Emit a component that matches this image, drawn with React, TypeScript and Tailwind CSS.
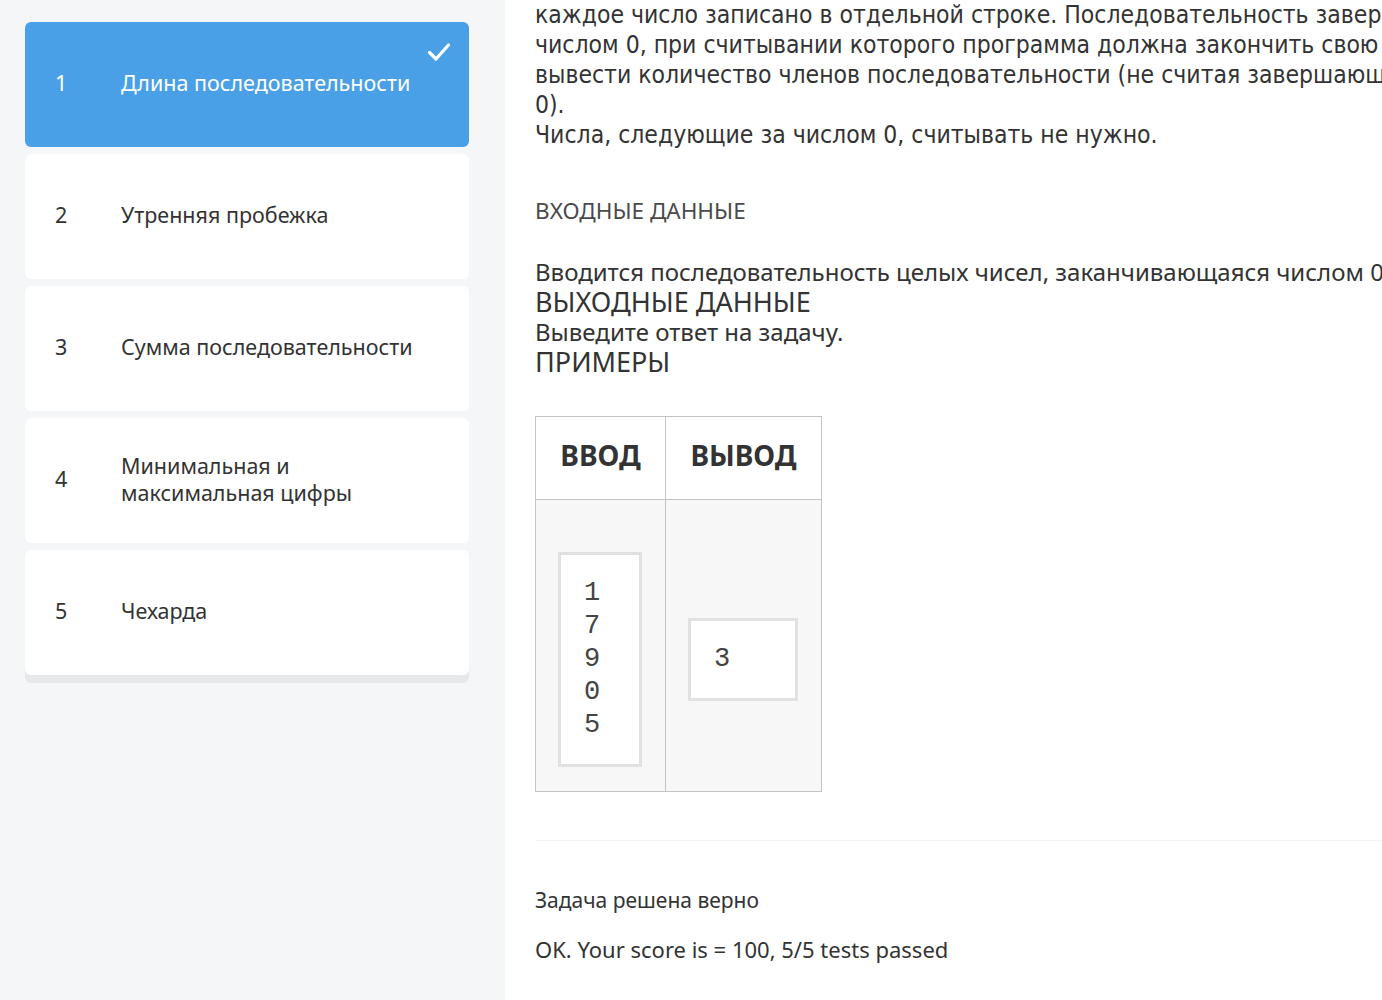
const tasks = [
  { n: 1, title: "Длина последовательности", done: true },
  { n: 2, title: "Утренняя пробежка" },
  { n: 3, title: "Сумма последовательности" },
  { n: 4, title: "Минимальная и максимальная цифры" },
  { n: 5, title: "Чехарда" },
];

const sans = "font-['Noto_Sans',sans-serif]";

function TaskCard({ n, title, done, last }: { n: number; title: string; done?: boolean; last?: boolean }) {
  return (
    <div
      className={
        "relative flex items-center h-[125px] rounded-md pl-[30px] pr-[40px] pb-[4px] text-[21.5px] leading-[27px] " +
        (done ? "bg-[#4aa0e6] text-white" : "bg-white text-[#333]") +
        (last ? " shadow-[0_8px_0_0_#e7e8ea]" : "")
      }
    >
      <span className="w-[66px] shrink-0">{n}</span>
      <span>{title}</span>
      {done && (
        <svg className="absolute right-[18px] top-[20px]" width="24" height="20" viewBox="0 0 24 20" fill="none">
          <path d="M2.5 10.5 L9 17 L21.5 3" stroke="white" strokeWidth="3.2" strokeLinecap="round" strokeLinejoin="round" />
        </svg>
      )}
    </div>
  );
}

export default function App() {
  return (
    <div className={"w-[1382px] h-[1000px] overflow-hidden flex bg-white " + sans}>
      <aside className="w-[505px] shrink-0 bg-[#f5f6f8] pt-[22px] pl-[25px] pr-[36px]">
        <div className="flex flex-col gap-[7px]">
          {tasks.map((t, i) => (
            <TaskCard key={t.n} {...t} last={i === tasks.length - 1} />
          ))}
        </div>
      </aside>

      <main className="pl-[30px] w-[1200px] shrink-0 text-[#333]">
        <p className="font-['DejaVu_Sans_Condensed','Liberation_Sans_Narrow',sans-serif] [font-stretch:condensed] text-[24.5px] leading-[30px] whitespace-nowrap">
          каждое число записано в отдельной строке. Последовательность завершается
          <br />
          числом 0, при считывании которого программа должна закончить свою работу и
          <br />
          вывести количество членов последовательности (не считая завершающего числа
          <br />
          0).
          <br />
          Числа, следующие за числом 0, считывать не нужно.
        </p>

        <h3 className="mt-[48px] text-[22.5px] leading-[26px] text-[#4a4a4a]">ВХОДНЫЕ ДАННЫЕ</h3>

        <p className="mt-[33px] text-[24px] leading-[30px] whitespace-nowrap">
          Вводится последовательность целых чисел, заканчивающаяся числом 0.
        </p>
        <h3 className="text-[27px] leading-[30px]">ВЫХОДНЫЕ ДАННЫЕ</h3>
        <p className="text-[24px] leading-[30px]">Выведите ответ на задачу.</p>
        <h3 className="text-[27px] leading-[30px]">ПРИМЕРЫ</h3>

        <table className="mt-[39px] border-collapse border border-[#c4c4c4]">
          <thead>
            <tr className="h-[83px] bg-white">
              <th className="w-[130px] border border-[#c4c4c4] pb-[6px] text-[28px] font-bold text-[#333]">ВВОД</th>
              <th className="w-[156px] border border-[#c4c4c4] pb-[6px] text-[28px] font-bold text-[#333]">ВЫВОД</th>
            </tr>
          </thead>
          <tbody>
            <tr className="h-[292px] bg-[#f7f7f7]">
              <td className="border border-[#c4c4c4] px-[22px] align-middle">
                <pre className="mt-[27px] bg-white border-[3px] border-[#e1e1e1] w-[84px] pl-[23px] py-[22px] font-['Liberation_Mono',monospace] text-[27px] leading-[33px] text-[#444]">
                  {"1\n7\n9\n0\n5"}
                </pre>
              </td>
              <td className="border border-[#c4c4c4] px-[22px] align-middle">
                <pre className="mt-[27px] bg-white border-[3px] border-[#e1e1e1] w-[110px] pl-[23px] py-[22px] font-['Liberation_Mono',monospace] text-[27px] leading-[33px] text-[#444]">
                  3
                </pre>
              </td>
            </tr>
          </tbody>
        </table>

        <div className="mt-[48px] border-t border-[#f1f2f4]" />

        <p className="mt-[46px] text-[21px] leading-[26px]">Задача решена верно</p>
        <p className="mt-[22px] text-[22px] leading-[28px]">OK. Your score is = 100, 5/5 tests passed</p>
      </main>
    </div>
  );
}
